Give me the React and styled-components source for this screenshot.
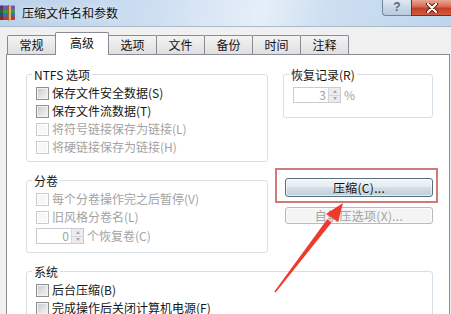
import React from "react";
import styled, { createGlobalStyle } from "styled-components";

const GlobalStyle = createGlobalStyle`
  html, body {
    margin: 0;
    padding: 0;
  }
  body {
    width: 451px;
    height: 314px;
    overflow: hidden;
    background: #f0f0f0;
    font-family: "Noto Sans CJK SC", "Liberation Sans", sans-serif;
    font-size: 12px;
    color: #161616;
  }
`;

const WinRarIcon = () => (
  <svg width="17" height="18" viewBox="0 0 17 18">
    <rect x="0" y="13" width="15" height="4" rx="1" fill="#c8332f" />
    <rect x="0" y="9.5" width="15" height="4" rx="1" fill="#2e6fc4" />
    <rect x="0" y="6" width="15" height="4" rx="1" fill="#3f9b3a" />
    <rect x="0" y="2.5" width="15" height="4" rx="1" fill="#7b4fb8" />
    <rect x="0" y="2.5" width="3" height="14.5" fill="#1d1d2b" opacity="0.45" />
    <rect x="8" y="2" width="3" height="15.5" fill="#d7b56d" />
    <rect x="8" y="2" width="1" height="15.5" fill="#8a6a2c" />
  </svg>
);

const Dialog = () => {
  return (
    <Window>
      <TitleBar>
        <WinRarIcon />
        <Title>压缩文件名和参数</Title>
        <CaptionButtons>
          <HelpButton>?</HelpButton>
          <CloseButton>
            <svg width="14" height="10" viewBox="0 0 14 10">
              <path
                d="M3 1 L11 9 M11 1 L3 9"
                stroke="#5b1a10"
                strokeWidth="4"
                strokeLinecap="round"
              />
              <path
                d="M3 1 L11 9 M11 1 L3 9"
                stroke="#ffffff"
                strokeWidth="2.2"
                strokeLinecap="round"
              />
            </svg>
          </CloseButton>
        </CaptionButtons>
      </TitleBar>

      <Body>
        <TabStrip>
          {["常规", "高级", "选项", "文件", "备份", "时间", "注释"].map((t) => (
            <Tab key={t} $active={t === "高级"}>
              {t}
            </Tab>
          ))}
        </TabStrip>

        <Panel>
          <Grid>
            <Group>
              <Legend>NTFS 选项</Legend>
              <CheckRow label="保存文件安全数据(S)" />
              <CheckRow label="保存文件流数据(T)" />
              <CheckRow label="将符号链接保存为链接(L)" disabled />
              <CheckRow label="将硬链接保存为链接(H)" disabled />
            </Group>

            <Group $pad="3px 8px 14px 9px">
              <Legend>恢复记录(R)</Legend>
              <SpinRow $height={16} $top={3}>
                <Spinner value="3" />
                <Caption $disabled>%</Caption>
              </SpinRow>
            </Group>

            <Group $pad="3px 8px 6px 9px">
              <Legend>分卷</Legend>
              <CheckRow label="每个分卷操作完之后暂停(V)" disabled />
              <CheckRow label="旧风格分卷名(L)" disabled />
              <SpinRow $height={20}>
                <Spinner value="0" />
                <Caption $disabled>个恢复卷(C)</Caption>
              </SpinRow>
            </Group>

            <ButtonStack>
              <Highlight>
                <PushButton $primary>压缩(C)...</PushButton>
              </Highlight>
              <PushButton disabled>自解压选项(X)...</PushButton>
            </ButtonStack>

            <Group $wide>
              <Legend>系统</Legend>
              <CheckRow label="后台压缩(B)" />
              <CheckRow label="完成操作后关闭计算机电源(F)" />
            </Group>
          </Grid>
        </Panel>
      </Body>

      <ArrowLayer viewBox="0 0 451 314">
        <polygon
          points="274.4,291.5 275.6,292.5 331.6,222.6 327.2,219.2"
          fill="#ee3a2c"
        />
        <polygon
          points="343,203 338.2,222 332,217.8 326,214"
          fill="#ee3a2c"
        />
      </ArrowLayer>
    </Window>
  );
};

const CheckRow = ({ label, disabled }) => (
  <Row>
    <CheckBox $disabled={disabled} />
    <Caption $disabled={disabled}>{label}</Caption>
  </Row>
);

const Spinner = ({ value }) => (
  <SpinBox>
    <SpinValue>{value}</SpinValue>
    <SpinArrows>
      <SpinHalf>
        <ArrowUp />
      </SpinHalf>
      <SpinHalf>
        <ArrowDown />
      </SpinHalf>
    </SpinArrows>
  </SpinBox>
);

export default function App() {
  return (
    <>
      <GlobalStyle />
      <Dialog />
    </>
  );
}

const Window = styled.div`
  position: relative;
  width: 451px;
  height: 314px;
  overflow: hidden;
  display: flex;
  flex-direction: column;
`;

const TitleBar = styled.div`
  height: 26px;
  flex-shrink: 0;
  display: flex;
  align-items: flex-start;
  border-bottom: 1px solid #a9b9cc;
  background: linear-gradient(
    100deg,
    #bad1ea 0%,
    #cadcf0 30%,
    #dde9f6 50%,
    #e6eff9 58%,
    #cddff1 72%,
    #bfd5ec 100%
  );

  & > svg {
    margin-top: 3px;
    flex-shrink: 0;
  }
`;

const Title = styled.div`
  margin: 5px 0 0 5px;
  line-height: 15px;
  font-size: 12px;
  color: #0e0e0e;
  text-shadow: 0 0 6px rgba(255, 255, 255, 0.9);
`;

const CaptionButtons = styled.div`
  margin-left: auto;
  display: flex;
`;

const HelpButton = styled.div`
  width: 29px;
  height: 16px;
  box-sizing: border-box;
  border: 1px solid #72839a;
  border-top: none;
  border-right: none;
  border-radius: 0 0 0 4px;
  background: linear-gradient(#dfe8f2, #c8d6e6 55%, #b9cbe0);
  font-family: "Liberation Sans", sans-serif;
  font-weight: bold;
  font-size: 12px;
  line-height: 15px;
  text-align: center;
  color: #56687f;
`;

const CloseButton = styled.div`
  width: 40px;
  height: 16px;
  box-sizing: border-box;
  border: 1px solid #7a2c20;
  border-top: none;
  border-right: none;
  background: linear-gradient(#e9a796, #d66a52 45%, #c43f26 55%, #d25a3f);
  display: flex;
  align-items: center;
  justify-content: center;
`;

const Body = styled.div`
  flex: 1;
  display: flex;
  flex-direction: column;
  padding: 5px 1px 0 6px;
  min-height: 0;
`;

const TabStrip = styled.div`
  position: relative;
  z-index: 1;
  display: flex;
  align-items: flex-end;
  height: 22px;
  padding-left: 1px;
`;

const Tab = styled.div`
  box-sizing: border-box;
  width: ${(p) => (p.$active ? 54 : 49)}px;
  height: ${(p) => (p.$active ? 23 : 19)}px;
  margin-left: -1px;
  margin-bottom: ${(p) => (p.$active ? -1 : 0)}px;
  border: 1px solid #898c95;
  border-bottom: none;
  border-radius: 2px 2px 0 0;
  text-align: center;
  line-height: ${(p) => (p.$active ? 20 : 18)}px;
  font-size: 12px;
  color: #111;
  z-index: ${(p) => (p.$active ? 2 : 0)};
  background: ${(p) =>
    p.$active ? "#ffffff" : "linear-gradient(#f4f4f4, #e9e9e9 50%, #dfdfdf)"};

  &:first-child {
    margin-left: 0;
  }
`;

const Panel = styled.div`
  flex: 1;
  border: 1px solid #898c95;
  border-bottom: none;
  background: #ffffff;
`;

const Grid = styled.div`
  display: grid;
  grid-template-columns: 242px 150px;
  column-gap: 15px;
  row-gap: 12px;
  align-items: start;
  padding: 13px 0 0 19px;
`;

const Group = styled.fieldset`
  margin: 0;
  min-width: 0;
  padding: ${(p) => p.$pad || "3px 8px 5px 9px"};
  border: 1px solid #d5dfe5;
  border-radius: 3px;
  grid-column: ${(p) => (p.$wide ? "1 / -1" : "auto")};
`;

const Legend = styled.legend`
  margin-left: -4px;
  padding: 0 2px;
  line-height: 13px;
  font-size: 12px;
  color: #161616;
`;

const Row = styled.div`
  display: flex;
  align-items: center;
  gap: 3px;
  height: 18px;
`;

const CheckBox = styled.span`
  box-sizing: border-box;
  width: 13px;
  height: 13px;
  flex-shrink: 0;
  border: 1px solid ${(p) => (p.$disabled ? "#c9cbcd" : "#8e8f8f")};
  background: ${(p) =>
    p.$disabled
      ? "#f7f7f7"
      : "linear-gradient(135deg, #c4c8ce, #e4e6e8 60%, #f3f3f3)"};
  box-shadow: inset 0 0 0 1px ${(p) => (p.$disabled ? "#ffffff" : "#f2f2f2")};
`;

const Caption = styled.span`
  font-size: 12px;
  line-height: 14px;
  white-space: nowrap;
  color: ${(p) => (p.$disabled ? "#a3a3a3" : "#161616")};
`;

const SpinRow = styled.div`
  display: flex;
  align-items: center;
  gap: 3px;
  height: ${(p) => p.$height}px;
  margin-top: ${(p) => p.$top || 0}px;
`;

const SpinBox = styled.div`
  box-sizing: border-box;
  width: 48px;
  height: 16px;
  display: flex;
  border: 1px solid #c9ccd0;
  background: #ffffff;
`;

const SpinValue = styled.div`
  flex: 1;
  text-align: right;
  padding-right: 2px;
  line-height: 14px;
  font-size: 12px;
  color: #a3a3a3;
`;

const SpinArrows = styled.div`
  width: 11px;
  display: flex;
  flex-direction: column;
  border-left: 1px solid #d6d6d6;
  background: #ececec;
`;

const SpinHalf = styled.div`
  flex: 1;
  display: flex;
  align-items: center;
  justify-content: center;

  & + & {
    border-top: 1px solid #d6d6d6;
  }
`;

const ArrowUp = styled.span`
  width: 0;
  height: 0;
  border-left: 2.5px solid transparent;
  border-right: 2.5px solid transparent;
  border-bottom: 3px solid #a8a8a8;
`;

const ArrowDown = styled.span`
  width: 0;
  height: 0;
  border-left: 2.5px solid transparent;
  border-right: 2.5px solid transparent;
  border-top: 3px solid #a8a8a8;
`;

const ButtonStack = styled.div`
  display: flex;
  flex-direction: column;
  gap: 10px;
  padding: 4px 0 0 2px;
`;

const Highlight = styled.div`
  position: relative;

  &::after {
    content: "";
    position: absolute;
    top: -10px;
    left: -10px;
    right: -5px;
    bottom: -6px;
    border: 2px solid rgba(190, 80, 76, 0.75);
    pointer-events: none;
  }
`;

const PushButton = styled.div`
  box-sizing: border-box;
  width: 148px;
  height: ${(p) => (p.$primary ? 19 : 17)}px;
  border: 1px solid ${(p) => (p.$primary ? "#56707f" : "#b6babd")};
  border-radius: 3px;
  text-align: center;
  font-size: 12px;
  line-height: ${(p) => (p.$primary ? 17 : 15)}px;
  letter-spacing: 0.3px;
  color: ${(p) => (p.disabled ? "#a3a3a3" : "#111")};
  background: ${(p) =>
    p.$primary
      ? "linear-gradient(#f3f6f8, #e4ebf0 45%, #d2dde4 52%, #c3d0d9)"
      : "#f4f4f4"};
  box-shadow: inset 0 0 0 1px
    ${(p) => (p.$primary ? "rgba(255,255,255,0.55)" : "#fbfbfb")};
`;

const ArrowLayer = styled.svg`
  position: absolute;
  left: 0;
  top: 0;
  width: 451px;
  height: 314px;
  pointer-events: none;
  z-index: 5;
`;
